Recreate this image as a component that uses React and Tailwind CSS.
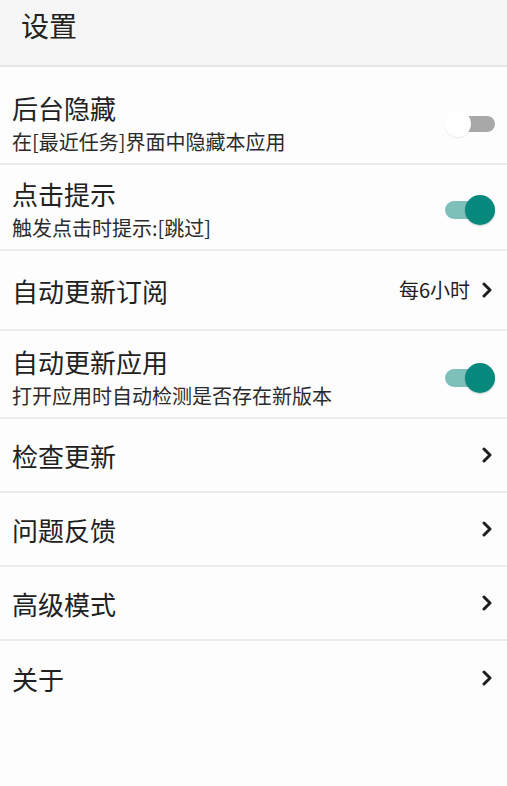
import React, { useState } from 'react';

const Chevron = () => (
  <svg width="14" height="16" viewBox="0 0 14 16" className="shrink-0">
    <polyline points="4,2 10,8 4,14" fill="none" stroke="#1f1f1f" strokeWidth="3" strokeLinecap="round" strokeLinejoin="round" />
  </svg>
);

const Toggle = ({ on, onClick }) => (
  <button onClick={onClick} className="relative w-[50px] h-[30px] shrink-0">
    {on ? (
      <>
        <span className="absolute left-0 right-0 top-[6px] h-[18px] rounded-full bg-[#7dc0ba]" />
        <span className="absolute right-0 top-0 w-[30px] h-[30px] rounded-full bg-[#078a7d] shadow-[0_1px_2px_rgba(0,0,0,0.2)]" />
      </>
    ) : (
      <>
        <span className="absolute left-[2px] right-0 top-[7px] h-[16px] rounded-full bg-[#a8a8a8]" />
        <span className="absolute left-0 top-[2px] w-[26px] h-[26px] rounded-full bg-white shadow-[0_1px_2px_rgba(0,0,0,0.08)]" />
      </>
    )}
  </button>
);

const App = () => {
  const [hide, setHide] = useState(false);
  const [tip, setTip] = useState(true);
  const [autoApp, setAutoApp] = useState(true);

  const links = ['检查更新', '问题反馈', '高级模式', '关于'];

  return (
    <div className="w-full min-h-[786px] bg-[#fdfdfd] text-[#212121]" style={{ fontFamily: '"Noto Sans CJK SC", "Noto Sans", sans-serif' }}>
      {/* Header */}
      <div className="h-[67px] bg-[#f6f6f6] border-b-2 border-[#e6e6e6] pl-[21px] pt-[5px]">
        <div className="text-[28px] leading-[40px]">设置</div>
      </div>

      <div className="pt-[12px]">
        {/* switch rows */}
        <div className="flex items-center pl-[12px] pr-[12px] pt-[12px] pb-[7px] border-b-2 border-[#ebebeb]">
          <div className="flex-1">
            <div className="text-[26px] leading-[33px]">后台隐藏</div>
            <div className="mt-[4px] text-[20px] leading-[28px] text-[#2b2b2b]">在[最近任务]界面中隐藏本应用</div>
          </div>
          <Toggle on={hide} onClick={() => setHide(!hide)} />
        </div>

        <div className="flex items-center pl-[12px] pr-[12px] pt-[12px] pb-[7px] border-b-2 border-[#ebebeb]">
          <div className="flex-1">
            <div className="text-[26px] leading-[33px]">点击提示</div>
            <div className="mt-[4px] text-[20px] leading-[28px] text-[#2b2b2b]">触发点击时提示:[跳过]</div>
          </div>
          <Toggle on={tip} onClick={() => setTip(!tip)} />
        </div>

        <div className="h-[80px] flex items-center pl-[12px] pr-[13px] border-b-2 border-[#ebebeb]">
          <div className="flex-1 text-[26px] leading-[33px]">自动更新订阅</div>
          <span className="text-[20px] leading-[28px] mr-[10px]">每6小时</span>
          <Chevron />
        </div>

        <div className="flex items-center pl-[12px] pr-[12px] pt-[14px] pb-[7px] border-b-2 border-[#ebebeb]">
          <div className="flex-1">
            <div className="text-[26px] leading-[33px]">自动更新应用</div>
            <div className="mt-[4px] text-[20px] leading-[28px] text-[#2b2b2b]">打开应用时自动检测是否存在新版本</div>
          </div>
          <Toggle on={autoApp} onClick={() => setAutoApp(!autoApp)} />
        </div>

        {/* link rows */}
        {links.map((label, i) => (
          <div
            key={label}
            className={`h-[74px] flex items-center pl-[12px] pr-[13px] ${i < links.length - 1 ? 'border-b-2 border-[#ebebeb]' : ''}`}
          >
            <div className="flex-1 text-[26px] leading-[33px]">{label}</div>
            <Chevron />
          </div>
        ))}
      </div>
    </div>
  );
};

export default App;
